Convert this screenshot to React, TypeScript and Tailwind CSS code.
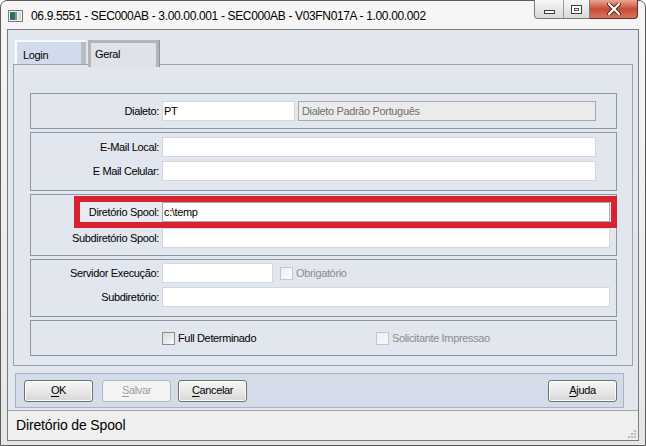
import { ReactNode } from "react"

const Label = ({ text }: { text: string }) => (
  <div className="w-[131px] shrink-0 pr-[3px] text-right">{text}</div>
)

const Field = ({ w, value, disabled }: { w: string; value?: string; disabled?: boolean }) => (
  <div
    className={
      disabled
        ? `${w} h-[20px] border border-[#a9a9a9] bg-[#ebebeb] pl-[3px] leading-[18px] text-[#6f6f6f]`
        : `${w} h-[20px] border border-[#d3d8e0] bg-white pl-[1px] leading-[18px] text-black`
    }
  >
    {value}
  </div>
)

const Check = ({ label, disabled }: { label: string; disabled?: boolean }) => (
  <div className="flex items-center">
    <div
      className={
        disabled
          ? "w-[13px] h-[13px] border border-[#c4c6c9] bg-gradient-to-br from-[#eceef1] to-[#fbfbfb]"
          : "w-[13px] h-[13px] border border-[#8b8d90] bg-gradient-to-br from-[#d6d8db] to-[#fbfbfb]"
      }
    />
    <span className={disabled ? "ml-[3px] text-[#8a8d92]" : "ml-[3px] text-black"}>{label}</span>
  </div>
)

const Row = ({ label, children }: { label: string; children: ReactNode }) => (
  <div className="flex items-center h-[20px]">
    <Label text={label} />
    {children}
  </div>
)

const Btn = ({ first, rest, disabled }: { first: string; rest: string; disabled?: boolean }) => (
  <div
    className={
      disabled
        ? "w-[69px] h-[22px] rounded-[3px] border border-[#b3b6bb] bg-[#f3f3f3] flex items-center justify-center text-[#9a9da2]"
        : "w-[69px] h-[22px] rounded-[3px] border border-[#707070] bg-gradient-to-b from-[#f6f6f6] via-[#e9e9e9] to-[#d6d6d6] flex items-center justify-center text-black shadow-[inset_0_0_0_1px_#fbfbfb]"
    }
  >
    <span>
      <span className="underline underline-offset-2">{first}</span>
      {rest}
    </span>
  </div>
)

const App = () => {
  return (
    <div className="w-[646px] h-[446px] overflow-hidden bg-white">
      <div className="w-[646px] h-[446px] rounded-t-[7px] border border-[#5c5c5c] bg-gradient-to-b from-[#f6f6f6] via-[#eeeeee] to-[#e6e6e6] font-['Liberation_Sans',Arial,sans-serif] text-[11px] tracking-[-0.35px] text-black">
        {/* title bar */}
        <div className="h-[28px] flex items-start">
          <svg className="mt-[9px] ml-[7px]" width="15" height="12" viewBox="0 0 15 12">
            <rect x="0.5" y="0.5" width="14" height="11" fill="#f4f4f4" stroke="#7b7b7b" />
            <rect x="2" y="2" width="5" height="8" fill="#2f6e6a" />
            <rect x="7" y="2" width="2" height="8" fill="#6d9c98" />
            <rect x="10" y="2" width="3" height="8" fill="#d8dcdc" />
          </svg>
          <div className="ml-[8px] mt-[6px] text-[12px] tracking-[-0.35px] text-black">
            06.9.5551 - SEC000AB - 3.00.00.001 - SEC000AB - V03FN017A - 1.00.00.002
          </div>
          <div className="ml-auto mr-[7px] flex -mt-[1px]">
            <div className="flex h-[19px] rounded-bl-[4px] border border-t-0 border-[#7a7a7a] bg-gradient-to-b from-[#f7f7f7] to-[#d9d9d9]">
              <div className="w-[29px] flex items-center justify-center border-r border-[#9a9a9a]">
                <div className="w-[11px] h-[4px] mt-[5px] border border-[#3d3d3d] bg-white" />
              </div>
              <div className="w-[25px] flex items-center justify-center">
                <div className="w-[11px] h-[9px] border border-[#3d3d3d] bg-white flex items-center justify-center">
                  <div className="w-[5px] h-[3px] border border-[#555]" />
                </div>
              </div>
            </div>
            <div className="w-[48px] h-[19px] rounded-br-[4px] border border-t-0 border-l-0 border-[#6b2a20] bg-gradient-to-b from-[#e9a694] via-[#c84a34] to-[#d7755d] flex items-center justify-center">
              <svg width="14" height="12" viewBox="0 0 14 12">
                <path d="M2 1 L12 11 M12 1 L2 11" stroke="#5a2118" strokeWidth="4" strokeLinecap="round" />
                <path d="M2 1 L12 11 M12 1 L2 11" stroke="#ffffff" strokeWidth="2.2" strokeLinecap="round" />
              </svg>
            </div>
          </div>
        </div>

        {/* client area */}
        <div className="mx-[6px] h-[412px] border border-[#7b7b7b] bg-[#e2e6ee] flex flex-col">
          {/* tabs */}
          <div className="mt-[10px] ml-[7px] h-[24px] flex items-start">
            <div className="w-[71px] h-[24px] flex border-l-2 border-t-2 border-[#fafbfd] bg-[#d2dbec]">
              <div className="flex-1 pl-[6px] pt-[5px]">Login</div>
              <div className="w-[5px] bg-[#b8bbc0]" />
            </div>
            <div className="relative z-10 ml-[2px] w-[71px] h-[27px] border-[3px] border-b-0 border-[#b3b5b9] bg-[#dfe2e8] pl-[4px] pt-[3px] shadow-[1px_0_0_#8f949b]">
              Geral
            </div>
          </div>

          {/* tab panel */}
          <div className="ml-[5px] w-[620px] h-[302px] border border-[#9aa2ae] pl-[16px] pt-[28px] flex flex-col gap-[3px]">
            <div className="w-[587px] h-[36px] border border-[#8d96a3] pt-[7px]">
              <Row label="Dialeto:">
                <Field w="w-[133px]" value="PT" />
                <div className="ml-[3px]">
                  <Field w="w-[298px]" value="Dialeto Padrão Português" disabled />
                </div>
              </Row>
            </div>

            <div className="w-[587px] h-[59px] border border-[#8d96a3] pt-[4px] flex flex-col gap-[4px]">
              <Row label="E-Mail Local:">
                <Field w="w-[434px]" />
              </Row>
              <Row label="E Mail Celular:">
                <Field w="w-[434px]" />
              </Row>
            </div>

            <div className="relative w-[587px] h-[62px] border border-[#8d96a3] pt-[7px] flex flex-col gap-[6px]">
              <div className="absolute left-[43px] top-[1px] w-[543px] h-[32px] bg-[#e8ebf1]" />
              <div className="relative">
                <Row label="Diretório Spool:">
                  <div className="w-[448px] h-[20px] border border-[#a7a9ad] bg-white pl-[1px] leading-[18px]">c:\temp</div>
                </Row>
              </div>
              <Row label="Subdiretório Spool:">
                <Field w="w-[448px]" />
              </Row>
              {/* red highlight drawn around the spool folder row */}
              <div className="absolute left-[43px] top-[1px] w-[543px] h-[32px] border-[6px] border-[#d9222f] pointer-events-none" />
            </div>

            <div className="w-[587px] h-[58px] border border-[#8d96a3] pt-[3px] flex flex-col gap-[4px]">
              <Row label="Servidor Execução:">
                <Field w="w-[111px]" />
                <div className="ml-[7px]">
                  <Check label="Obrigatório" disabled />
                </div>
              </Row>
              <Row label="Subdiretório:">
                <Field w="w-[448px]" />
              </Row>
            </div>

            <div className="w-[587px] h-[36px] border border-[#8d96a3] flex items-center">
              <div className="ml-[131px] w-[214px]">
                <Check label="Full Determinado" />
              </div>
              <Check label="Solicitante Impressao" disabled />
            </div>
          </div>

          {/* button bar */}
          <div className="mt-[7px] ml-[7px] w-[609px] h-[35px] border border-[#a8b3c5] bg-[#d4dcea] pl-[8px] pr-[6px] flex items-center">
            <Btn first="O" rest="K" />
            <div className="ml-[9px]">
              <Btn first="S" rest="alvar" disabled />
            </div>
            <div className="ml-[7px]">
              <Btn first="C" rest="ancelar" />
            </div>
            <div className="ml-auto">
              <Btn first="A" rest="juda" />
            </div>
          </div>

          {/* status bar */}
          <div className="mt-[2px] flex-1 border-t border-[#a3a3a3] bg-[#efefef] flex items-center justify-between">
            <span className="pl-[8px] pb-[1px] text-[14px] tracking-[-0.15px]">Diretório de Spool</span>
            <svg className="self-end mb-[1px] mr-[1px]" width="10" height="10" viewBox="0 0 10 10">
              <g fill="#b9b9b9">
                <rect x="7" y="1" width="2" height="2" />
                <rect x="4" y="4" width="2" height="2" />
                <rect x="7" y="4" width="2" height="2" />
                <rect x="1" y="7" width="2" height="2" />
                <rect x="4" y="7" width="2" height="2" />
                <rect x="7" y="7" width="2" height="2" />
              </g>
            </svg>
          </div>
        </div>
      </div>
    </div>
  )
}

export default App
